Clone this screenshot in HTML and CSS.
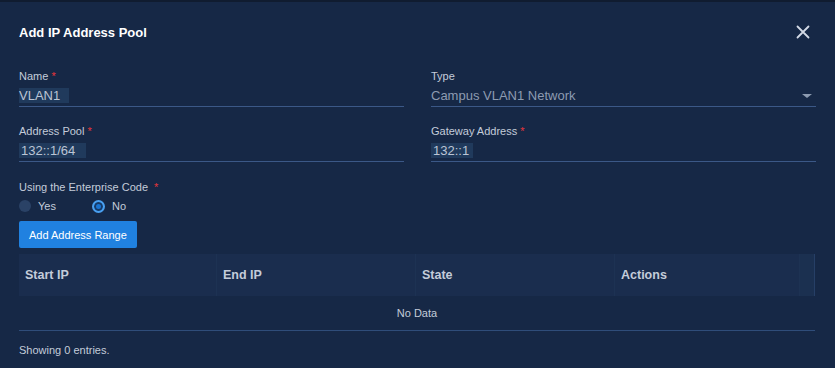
FILE: index.html
```html
<!doctype html>
<html>
<head>
  <link rel="stylesheet" href="styles.css">
</head>
<body>
  <div class="backdrop-strip"></div>
  <div class="modal">
    <div class="modal-head">
      <div class="modal-title">Add IP Address Pool</div>
      <svg class="close" width="14" height="14" viewBox="0 0 14 14">
        <path d="M1.5 1.5 L12.5 12.5 M12.5 1.5 L1.5 12.5" stroke="#d3dae6" stroke-width="1.8" stroke-linecap="round"/>
      </svg>
    </div>

    <div class="form-grid">
      <div class="field">
        <div class="label">Name <span class="req">*</span></div>
        <div class="input"><span class="val">VLAN1</span></div>
      </div>
      <div class="field">
        <div class="label">Type</div>
        <div class="input select">
          <span class="muted">Campus VLAN1 Network</span>
          <span class="caret"></span>
        </div>
      </div>
      <div class="field">
        <div class="label">Address Pool <span class="req">*</span></div>
        <div class="input"><span class="val val-pad">132::1/64</span></div>
      </div>
      <div class="field">
        <div class="label">Gateway Address <span class="req">*</span></div>
        <div class="input"><span class="val val-pad val-short">132::1</span></div>
      </div>
    </div>

    <div class="label radio-label">Using the Enterprise Code <span class="req req-gap">*</span></div>
    <div class="radios">
      <label class="radio"><span class="dot"></span>Yes</label>
      <label class="radio"><span class="dot checked"></span>No</label>
    </div>

    <button class="btn">Add Address Range</button>

    <div class="table">
      <div class="thead">
        <div class="th">Start IP</div>
        <div class="th">End IP</div>
        <div class="th">State</div>
        <div class="th">Actions</div>
        <div class="gutter"></div>
      </div>
      <div class="empty">No Data</div>
    </div>
    <div class="footer">Showing 0 entries.</div>
  </div>
</body>
</html>
```

FILE: styles.css
```css
html, body {
  margin: 0;
  padding: 0;
  height: 100%;
  overflow: hidden;
  background: #0d1828;
  font-family: "Liberation Sans", Arial, sans-serif;
}
.backdrop-strip {
  height: 2px;
  background: #101c30;
}
.modal {
  background: #162846;
  height: 366px;
  padding: 0 20px 0 19px;
  box-sizing: border-box;
  color: #c4ccda;
}
.modal-head {
  display: flex;
  align-items: center;
  justify-content: space-between;
  height: 60px;
  padding-right: 5px;
}
.modal-title {
  font-size: 13px;
  font-weight: bold;
  color: #ffffff;
}
.close {
  display: block;
}

.form-grid {
  display: grid;
  grid-template-columns: 385px 385px;
  column-gap: 27px;
  row-gap: 17px;
  padding-top: 7px;
}
.label {
  font-size: 11px;
  line-height: 14px;
  color: #c4ccda;
  margin-bottom: 2px;
}
.req {
  color: #e8363b;
}
.req-gap {
  margin-left: 3px;
}
.input {
  height: 21px;
  border-bottom: 1px solid #3b5887;
  display: flex;
  align-items: center;
  font-size: 13px;
  color: #bcc5d5;
}
.val {
  background: #203a5c;
  padding: 0 9px 0 0;
  line-height: 15px;
}
.val-pad {
  padding-left: 2px;
  padding-right: 11px;
}
.val-short {
  padding-right: 4px;
}
.muted {
  color: #8d9bb1;
}
.select {
  justify-content: space-between;
  padding-right: 4px;
}
.caret {
  width: 0;
  height: 0;
  border-left: 5px solid transparent;
  border-right: 5px solid transparent;
  border-top: 4px solid #8d9bb1;
}

.radio-label {
  margin-top: 18px;
}
.radios {
  display: flex;
  gap: 36px;
  height: 18px;
  align-items: center;
  margin-top: 3px;
}
.radio {
  display: flex;
  align-items: center;
  gap: 7px;
  font-size: 11px;
  color: #c4ccda;
}
.dot {
  width: 12px;
  height: 12px;
  border-radius: 50%;
  background: #2a4266;
  box-sizing: border-box;
}
.dot.checked {
  background: #1a74d1;
  border: 2px solid #4aa0f0;
  box-shadow: inset 0 0 0 2px #163a68;
  width: 13px;
  height: 13px;
}

.btn {
  display: block;
  margin-top: 6px;
  height: 27px;
  padding: 0 10px;
  border: 0;
  border-radius: 2px;
  background: #2081e0;
  color: #ffffff;
  font-family: "Liberation Sans", Arial, sans-serif;
  font-size: 11px;
  font-weight: 500;
}

.table {
  margin-top: 6px;
  border-bottom: 1px solid #2f4d7a;
}
.thead {
  display: grid;
  grid-template-columns: 198px 199px 199px 185px 15px;
  height: 42px;
  background: #1a2d4e;
}
.th {
  display: flex;
  align-items: center;
  padding-left: 6px;
  font-size: 12.5px;
  font-weight: bold;
  color: #c4ccda;
  border-right: 1px solid #1d3253;
}
.gutter {
  background: #1b3050;
  border-right: 1px solid #263f66;
}
.empty {
  height: 34px;
  display: flex;
  align-items: center;
  justify-content: center;
  font-size: 11px;
  color: #c4ccda;
}
.footer {
  font-size: 11px;
  color: #c4ccda;
  padding-top: 13px;
}
```
